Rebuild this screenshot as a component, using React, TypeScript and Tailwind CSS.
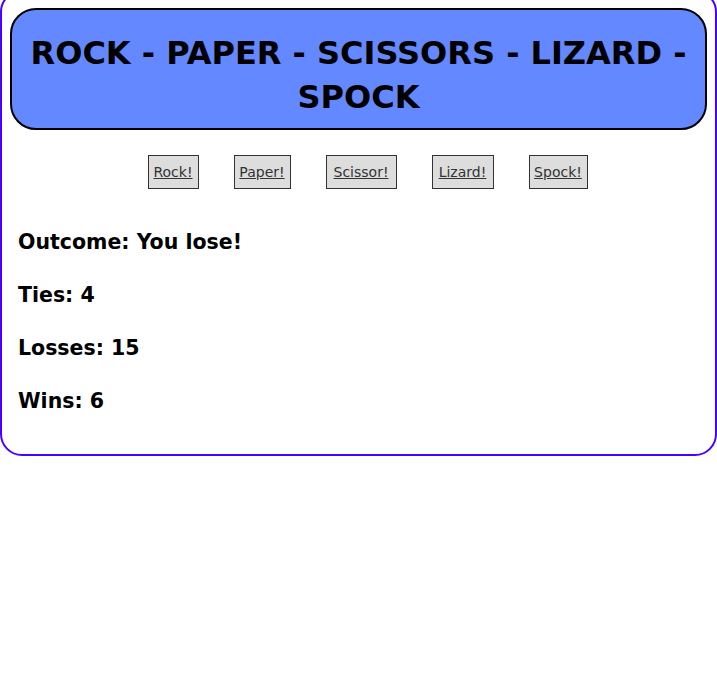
import React from "react";

const buttons: [string, string][] = [
  ["Rock!", "w-[51px]"],
  ["Paper!", "w-[57px]"],
  ["Scissor!", "w-[71px]"],
  ["Lizard!", "w-[62px]"],
  ["Spock!", "w-[59px]"],
];

export default function App() {
  return (
    <div className="min-h-[699px] bg-white font-['Comic_Sans_MS','DejaVu_Sans',sans-serif] text-black">
      <div className="-mt-[10px] rounded-[22px] border-2 border-[#4a00ff] pt-[16px] pb-[41px]">
        <div className="mx-[8px] rounded-[26px] border-2 border-black bg-[#6488ff] px-4 pt-[21px] pb-[9px] text-center text-[32px] font-bold leading-[44px]">
          ROCK - PAPER - SCISSORS - LIZARD - SPOCK
        </div>
        <div className="mt-[25px] flex justify-center gap-[35px] pl-[18px]">
          {buttons.map(([b, w]) => (
            <button
              key={b}
              className={`${w} h-[34px] border border-[#333] bg-[#dddddd] text-[14px] text-[#333] underline`}
            >
              {b}
            </button>
          ))}
        </div>
        <div className="mt-[41px] flex flex-col gap-[29px] px-[16px] text-[20.5px] font-bold leading-[24px]">
          <p>Outcome: You lose!</p>
          <p>Ties: 4</p>
          <p>Losses: 15</p>
          <p>Wins: 6</p>
        </div>
      </div>
    </div>
  );
}
